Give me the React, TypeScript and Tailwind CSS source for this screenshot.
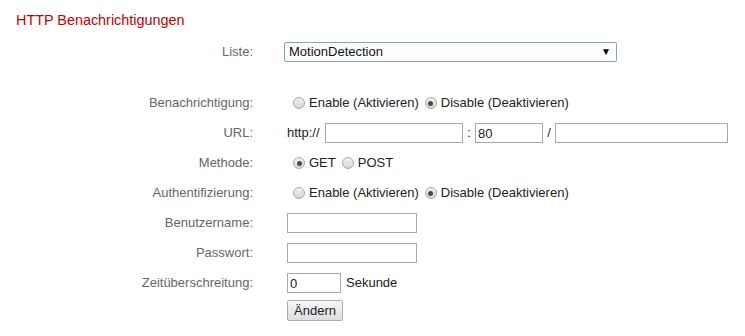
import React from 'react';

function Radio({ checked }: { checked?: boolean }) {
  return (
    <span className="ml-[6px] mr-[4px] flex h-[12px] w-[12px] shrink-0 items-center justify-center rounded-full border border-[#a9a9a9] bg-gradient-to-b from-[#f2f2f2] to-[#d6d6d6]">
      {checked && <span className="h-[5px] w-[5px] rounded-full bg-[#4a4a4a]" />}
    </span>
  );
}

function Field({ w, value = '' }: { w: string; value?: string }) {
  return (
    <input
      readOnly
      value={value}
      className={`${w} h-[20px] border border-[#a9a9a9] bg-white px-[2px] text-[13px] text-[#222] outline-none`}
    />
  );
}

function Row({ label, children, className = '' }: { label: string; children?: React.ReactNode; className?: string }) {
  return (
    <div className={`flex h-[30px] items-center ${className}`}>
      <div className="w-[253px] text-right text-[13px] text-[#666]">{label}</div>
      <div className="ml-[34px] flex items-center text-[13px] text-[#222]">{children}</div>
    </div>
  );
}

export default function App() {
  return (
    <div className="h-[336px] w-[745px] overflow-hidden bg-white pt-[11px] font-['Liberation_Sans',Arial,sans-serif]">
      <div className="ml-[16px] text-[14.4px] leading-[18px] text-[#c00000]">HTTP Benachrichtigungen</div>

      <Row label="Liste:" className="mt-[8px]">
        <div className="-ml-[3px] flex h-[20px] w-[333px] items-center justify-between rounded-[2px] border border-[#7da2ce] bg-white pl-[4px] pr-[5px]">
          <span className="text-[13px] text-[#111]">MotionDetection</span>
          <span className="text-[10px] leading-none text-black">▼</span>
        </div>
      </Row>

      <Row label="Benachrichtigung:" className="mt-[21px]">
        <Radio />
        <span>Enable (Aktivieren)</span>
        <Radio checked />
        <span>Disable (Deaktivieren)</span>
      </Row>

      <Row label="URL:">
        <span className="w-[38px]">http://</span>
        <Field w="w-[138px]" />
        <span className="w-[12px] text-center">:</span>
        <Field w="w-[68px]" value="80" />
        <span className="w-[12px] text-center">/</span>
        <Field w="w-[173px]" />
      </Row>

      <Row label="Methode:">
        <Radio checked />
        <span>GET</span>
        <Radio />
        <span>POST</span>
      </Row>

      <Row label="Authentifizierung:">
        <Radio />
        <span>Enable (Aktivieren)</span>
        <Radio checked />
        <span>Disable (Deaktivieren)</span>
      </Row>

      <Row label="Benutzername:">
        <Field w="w-[130px]" />
      </Row>

      <Row label="Passwort:">
        <Field w="w-[130px]" />
      </Row>

      <Row label="Zeitüberschreitung:">
        <Field w="w-[54px]" value="0" />
        <span className="ml-[5px]">Sekunde</span>
      </Row>

      <div className="ml-[287px] mt-[2px] flex">
        <button className="flex h-[21px] w-[56px] items-center justify-center rounded-[2px] border border-[#adadad] bg-gradient-to-b from-[#f6f6f6] to-[#dedede] text-[13px] text-[#222]">
          Ändern
        </button>
      </div>
    </div>
  );
}
